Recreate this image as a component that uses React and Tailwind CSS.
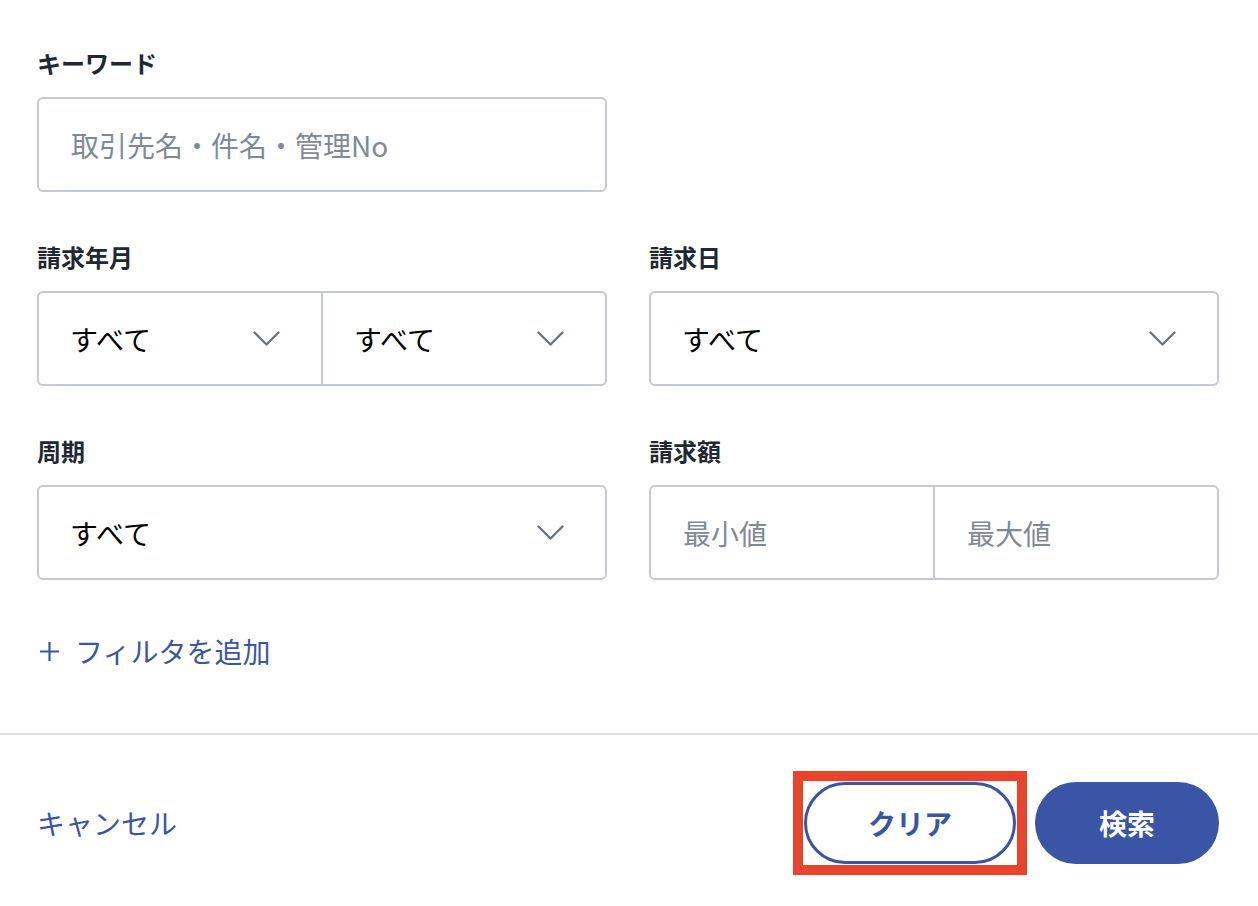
const font = {
  fontFamily: '"Noto Sans CJK JP", "Noto Sans", sans-serif',
};

const Chevron = () => (
  <svg width="27" height="16" viewBox="0 0 27 16" fill="none" className="text-[#6b7582]">
    <polyline
      points="1.5,1.5 13.5,13.5 25.5,1.5"
      stroke="currentColor"
      strokeWidth="2.4"
      strokeLinecap="round"
      strokeLinejoin="round"
    />
  </svg>
);

const PlusIcon = () => (
  <svg width="21" height="21" viewBox="0 0 21 21" fill="none">
    <path d="M10.5 1v19M1 10.5h19" stroke="currentColor" strokeWidth="2.2" />
  </svg>
);

const Label = ({ children }) => (
  <div className="text-[24px] leading-[24px] font-bold text-[#222831] mb-[22px]">
    {children}
  </div>
);

const SelectCell = ({ className = "" }) => (
  <div
    className={`flex flex-1 items-center justify-between pl-[31px] pr-[41px] text-[28px] text-black ${className}`}
  >
    <span>すべて</span>
    <Chevron />
  </div>
);

const Box = ({ children }) => (
  <div className="flex h-[95px] rounded-[6px] border-2 border-[#c4c9d2] bg-white">
    {children}
  </div>
);

const App = () => {
  return (
    <div className="w-[1258px] h-[906px] bg-white flex flex-col" style={font}>
      <div className="pl-[37px] pr-[39px] pt-[51px]">
        <div className="grid grid-cols-2 gap-x-[42px]">
          <div>
            <Label>キーワード</Label>
            <Box>
              <div className="flex items-center pl-[32px] text-[28px] text-[#808a97]">
                取引先名・件名・管理No
              </div>
            </Box>
          </div>
          <div />
          <div className="mt-[53px]">
            <Label>請求年月</Label>
            <Box>
              <SelectCell className="border-r-2 border-[#c4c9d2]" />
              <SelectCell className="pl-[20px]" />
            </Box>
          </div>
          <div className="mt-[53px]">
            <Label>請求日</Label>
            <Box>
              <SelectCell />
            </Box>
          </div>
          <div className="mt-[53px]">
            <Label>周期</Label>
            <Box>
              <SelectCell />
            </Box>
          </div>
          <div className="mt-[53px]">
            <Label>請求額</Label>
            <Box>
              <div className="flex flex-1 items-center pl-[32px] text-[28px] text-[#808a97] border-r-2 border-[#c4c9d2]">
                最小値
              </div>
              <div className="flex flex-1 items-center pl-[32px] text-[28px] text-[#808a97]">
                最大値
              </div>
            </Box>
          </div>
        </div>
        <div className="mt-[55px] flex items-center gap-[15px] pl-[2px] text-[28px] leading-[32px] text-[#3a55a5]">
          <PlusIcon />
          <span>フィルタを追加</span>
        </div>
      </div>
      <div className="mt-[66px] border-t-2 border-[#dde1e7]" />
      <div className="flex items-center justify-between pl-[37px] pr-[39px] pt-[36px]">
        <div className="text-[28px] text-[#3a55a5]">キャンセル</div>
        <div className="flex items-center gap-[19px]">
          <div className="border-[10px] border-[#e8432b] p-[1px] -mr-[11px]">
            <button className="w-[212px] h-[82px] rounded-full border-[3px] border-[#3a55a5] bg-white text-[28px] font-bold text-[#3a55a5]">
              クリア
            </button>
          </div>
          <button className="w-[184px] h-[82px] rounded-full bg-[#3a55a5] text-[28px] font-bold text-white">
            検索
          </button>
        </div>
      </div>
    </div>
  );
};

export default App;
